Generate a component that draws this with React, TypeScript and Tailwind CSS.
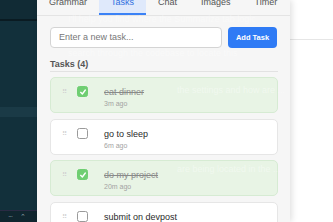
import React from 'react';

type Task = { id: number; text: string; ago: string; done: boolean };

const tasks: Task[] = [
  { id: 1, text: 'eat dinner', ago: '3m ago', done: true },
  { id: 2, text: 'go to sleep', ago: '6m ago', done: false },
  { id: 3, text: 'do my project', ago: '20m ago', done: true },
  { id: 4, text: 'submit on devpost', ago: '22m ago', done: false },
];

const tabs = ['Grammar', 'Tasks', 'Chat', 'Images', 'Timer'];

const font = { fontFamily: '"Liberation Sans", Arial, sans-serif' };

const Check = () => (
  <svg viewBox="0 0 12 12" className="h-[8px] w-[8px]" fill="none" stroke="white" strokeWidth="2" strokeLinecap="round" strokeLinejoin="round">
    <path d="M2.5 6.5 5 9l4.5-6" />
  </svg>
);

const TaskCard: React.FC<{ task: Task }> = ({ task }) => (
  <div
    className={
      'flex h-[36px] shrink-0 items-start rounded-[5px] border pl-[11px] pt-[8px] ' +
      (task.done ? 'border-[#d6ebd3] bg-[#e8f4e5]' : 'border-[#e6e6e6] bg-white')
    }
  >
    <div className="mt-[1px] w-[6px] text-[7px] leading-[10px] text-[#d0d0d0]">⠿</div>
    <div
      className={
        'ml-[9px] flex h-[11px] w-[11px] items-center justify-center rounded-[2.5px] border ' +
        (task.done ? 'border-[#6fce72] bg-[#6fce72]' : 'border-[#9a9a9a] bg-white')
      }
    >
      {task.done && <Check />}
    </div>
    <div className="ml-[16px]">
      <div className={'text-[9px] leading-[12px] ' + (task.done ? 'text-[#8a8a8a] line-through' : 'text-[#2b2b2b]')}>
        {task.text}
      </div>
      <div className="mt-[1px] text-[7px] leading-[10px] text-[#a3a3a3]">{task.ago}</div>
    </div>
  </div>
);

export default function App() {
  return (
    <div className="relative flex h-[222px] w-[333px] overflow-hidden bg-white" style={font}>
      {/* editor sidebar */}
      <aside className="flex w-[37px] shrink-0 flex-col bg-[#12303b]">
        <div className="h-[19px] bg-[#112b35]" />
        <div className="h-[2px] bg-[#0a1b22]" />
        <div className="h-[86px]" />
        <div className="h-[10px] bg-[#1a3a46]" />
        <div className="flex-1" />
        <div className="h-[1px] bg-[#2a2a44]" />
        <div className="flex h-[11px] items-center gap-[8px] bg-[#10262f] pl-[8px] text-[7px] leading-none text-[#8fa0a8]">
          <span className="tracking-[-1px]">···</span>
          <span>⌃</span>
        </div>
      </aside>

      {/* extension panel */}
      <main className="relative z-10 flex w-[253px] shrink-0 flex-col bg-[#f6f6f6] shadow-[2px_0_6px_rgba(0,0,0,0.12)]">
        <div className="-mt-[9px] flex border-b border-[#e4e4e4]">
          {tabs.map((t) => (
            <div
              key={t}
              className={
                'h-[24px] shrink-0 border-b-2 px-3 text-[9px] leading-[22px] ' +
                (t === 'Tasks' ? 'border-[#3b82f6] bg-[#dfe9fb] text-[#2f6fe0]' : 'border-transparent text-[#555]')
              }
            >
              {t}
            </div>
          ))}
        </div>

        <div className="flex flex-col pl-[13px] pr-[12px] pt-[11px]">
          <div className="flex gap-[6px]">
            <div className="flex h-[21px] w-[172px] items-center rounded-[4px] border border-[#d4d4d4] bg-white px-[8px] text-[9px] text-[#777]">
              Enter a new task...
            </div>
            <button className="h-[21px] w-[49px] rounded-[4px] bg-[#2f7bf5] text-[7.5px] font-bold text-white">Add Task</button>
          </div>

          <div className="mt-[10px] border-b border-[#e2e2e2] pb-[1px] text-[9px] font-bold leading-[12px] text-[#555]">
            Tasks (4)
          </div>

          <div className="mt-[5px] flex flex-col gap-[5.5px]">
            {tasks.map((t) => (
              <TaskCard key={t.id} task={t} />
            ))}
          </div>
        </div>

        {/* faint text showing through the panel */}
        <div className="pointer-events-none absolute inset-0 text-[9px] leading-[12px] text-white/40">
          <div className="absolute left-[31px] top-[13px] whitespace-nowrap">I'll help you find where the Summarize tab logic</div>
          <div className="absolute left-[31px] top-[47px] whitespace-nowrap">search through the codebase to locate this</div>
          <div className="absolute left-[140px] top-[84px] whitespace-nowrap">the settings and how are ...</div>
          <div className="absolute left-[140px] top-[163px] whitespace-nowrap">are being located in the ...</div>
        </div>
      </main>

      {/* right area */}
      <div className="flex flex-1 flex-col bg-white">
        <div className="h-[40px] border-b border-[#e6e6e6]" />
      </div>
    </div>
  );
}
